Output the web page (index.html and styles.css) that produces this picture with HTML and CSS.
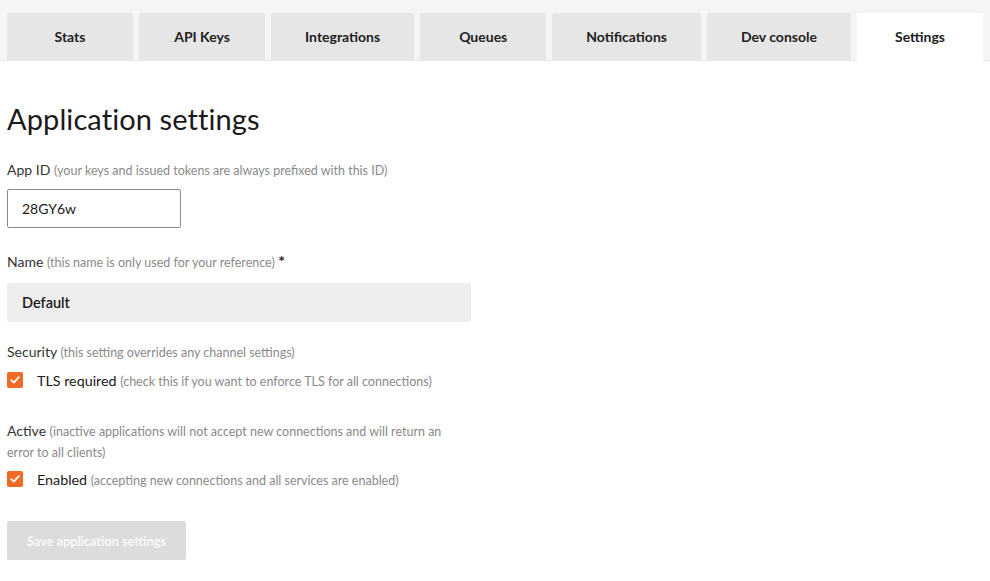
FILE: index.html
```html
<!DOCTYPE html>
<html>
<head>
<meta charset="utf-8">
<link rel="stylesheet" href="styles.css">
</head>
<body>
<nav class="tabbar">
  <a class="tab">Stats</a>
  <a class="tab">API Keys</a>
  <a class="tab">Integrations</a>
  <a class="tab">Queues</a>
  <a class="tab">Notifications</a>
  <a class="tab">Dev console</a>
  <a class="tab active">Settings</a>
</nav>
<main class="content">
  <h1 class="title">Application settings</h1>
  <form class="form">
    <div class="field field-appid">
      <label class="label">App ID <span class="hint">(your keys and issued tokens are always prefixed with this ID)</span></label>
      <input class="input input-bordered" type="text" value="28GY6w">
    </div>
    <div class="field field-name">
      <label class="label">Name <span class="hint">(this name is only used for your reference)</span> <span class="req">*</span></label>
      <input class="input input-filled" type="text" value="Default">
    </div>
    <div class="field field-security">
      <label class="label">Security <span class="hint">(this setting overrides any channel settings)</span></label>
      <div class="check-row">
        <span class="checkbox"><svg width="10" height="8" viewBox="0 0 10 8"><path d="M1.2 4.2 L3.8 6.6 L8.8 1.2" fill="none" stroke="#fff" stroke-width="1.8" stroke-linecap="round" stroke-linejoin="round"/></svg></span>
        <span class="check-text">TLS required <span class="hint">(check this if you want to enforce TLS for all connections)</span></span>
      </div>
    </div>
    <div class="field field-active">
      <label class="label label-wrap">Active <span class="hint">(inactive applications will not accept new connections and will return an error to all clients)</span></label>
      <div class="check-row">
        <span class="checkbox"><svg width="10" height="8" viewBox="0 0 10 8"><path d="M1.2 4.2 L3.8 6.6 L8.8 1.2" fill="none" stroke="#fff" stroke-width="1.8" stroke-linecap="round" stroke-linejoin="round"/></svg></span>
        <span class="check-text">Enabled <span class="hint">(accepting new connections and all services are enabled)</span></span>
      </div>
    </div>
    <button class="btn" type="button">Save application settings</button>
  </form>
</main>
</body>
</html>
```
FILE: styles.css
```css
* { box-sizing: border-box; }
html, body { margin: 0; padding: 0; background: #fff; }
body {
  font-family: "Lato", "Open Sans", sans-serif;
  color: #1e1e1e;
}
.tabbar {
  display: flex;
  gap: 6px;
  background: #f5f5f5;
  padding: 13px 7px 0 7px;
  border-bottom: 1px solid #e8e8e8;
  height: 61px;
}
.tab {
  min-width: 126px;
  height: 47px;
  padding: 0 35px;
  display: flex;
  align-items: center;
  justify-content: center;
  background: #e6e6e6;
  border-radius: 3px 3px 0 0;
  font-size: 14px;
  font-weight: 700;
  color: #222;
  white-space: nowrap;
}
.tab.active {
  background: #fff;
  height: 48px;
  margin-bottom: -1px;
  padding-bottom: 1px;
}
.content {
  padding: 0 7px;
}
.title {
  font-size: 29px;
  font-weight: 400;
  margin: 40px 0 0 0;
  line-height: 36px;
  color: #1a1a1a;
  letter-spacing: 0.1px;
}
.form {
  display: flex;
  flex-direction: column;
  margin-top: 23px;
}
.field {
  display: flex;
  flex-direction: column;
}
.label {
  font-size: 14px;
  line-height: 20px;
  color: #333;
}
.field-appid { margin-bottom: 23px; }
.field-appid .label { margin-bottom: 8px; }
.field-name { margin-bottom: 20px; }
.field-name .label { margin-bottom: 10px; }
.field-security { margin-bottom: 31px; }
.field-security .label { margin-bottom: 7px; }
.field-active .label { margin-bottom: 6px; }
.label-wrap { width: 460px; }
.hint {
  font-size: 12.5px;
  color: #8a8a8a;
}
.req { font-size: 16px; color: #222; font-weight: 700; }
.input {
  font-family: inherit;
  font-size: 14px;
  height: 39px;
  padding: 0 14px;
  color: #1a1a1a;
  outline: none;
}
.input-bordered {
  width: 174px;
  border: 1px solid #8c8c8c;
  border-radius: 2px;
  background: #fff;
}
.input-filled {
  width: 464px;
  border: none;
  background: #eeeeee;
  border-radius: 2px;
  font-weight: 600;
  font-size: 14.5px;
  padding-left: 15px;
}
.check-row {
  display: flex;
  align-items: center;
  gap: 14px;
  height: 20px;
}
.checkbox {
  width: 16px;
  height: 16px;
  border-radius: 2px;
  background: #f06a25;
  display: flex;
  align-items: center;
  justify-content: center;
}
.check-text {
  font-size: 14.3px;
  color: #1a1a1a;
}
.btn {
  align-self: flex-start;
  width: 179px;
  height: 39px;
  margin-top: 32px;
  border: none;
  border-radius: 2px;
  background: #dcdcdc;
  color: #f9f9f9;
  font-family: inherit;
  font-size: 12.7px;
  font-weight: 700;
}
```
